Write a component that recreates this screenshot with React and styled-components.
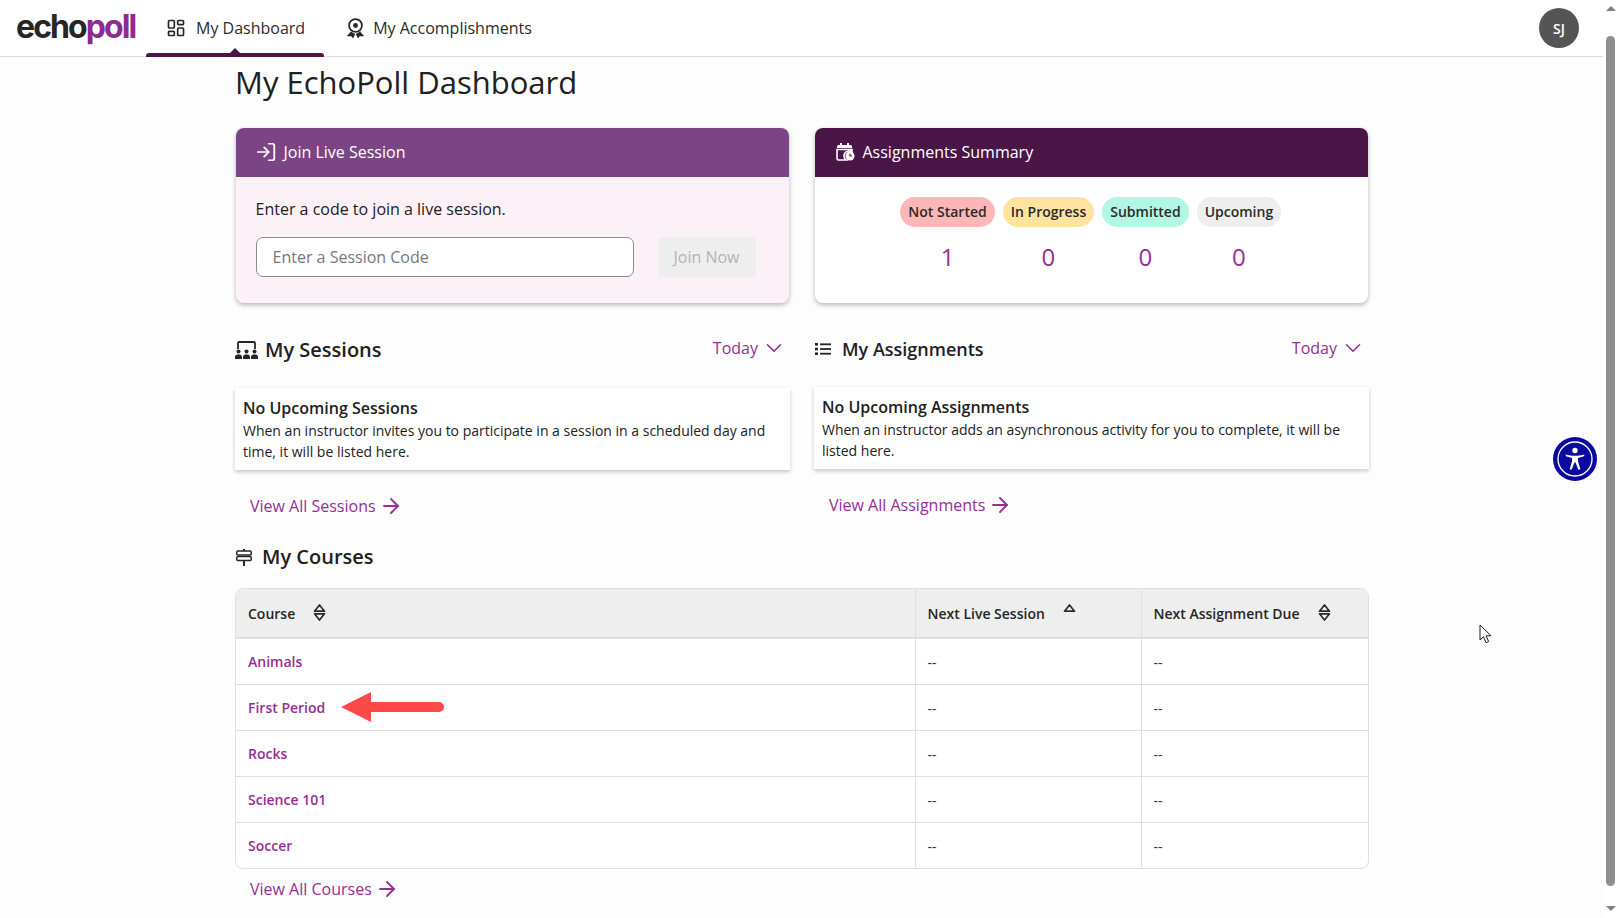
import React from 'react';
import styled, { createGlobalStyle } from 'styled-components';
import { ArrowRight, ChevronDown, LayoutDashboard, LogIn } from 'lucide-react';

const GlobalStyle = createGlobalStyle`
  html, body {
    margin: 0;
    padding: 0;
    height: 918px;
    overflow: hidden;
    background: #fdfdfd;
    font-family: 'Open Sans', 'Noto Sans', sans-serif;
    color: #212121;
  }
  * { box-sizing: border-box; }
`;

const Shell = styled.div`
  position: relative;
  display: flex;
  width: 1618px;
  height: 918px;
  overflow: hidden;
`;
const Page = styled.div`
  flex: 1;
  min-width: 0;
`;
const TopBar = styled.header`
  display: flex;
  align-items: stretch;
  height: 57px;
  padding: 0 24px 0 16px;
  background: #fff;
  border-bottom: 1px solid #dcdcdc;
`;
const Logo = styled.div`
  width: 130px;
  font-family: 'Inter', sans-serif;
  font-weight: 700;
  font-size: 32px;
  letter-spacing: -1.9px;
  line-height: 54px;
  color: #262626;
  span { color: #8e2a90; }
`;
const NavTab = styled.a`
  position: relative;
  display: flex;
  align-items: center;
  gap: ${p => p.$gap}px;
  height: 56px;
  padding: 0 ${p => p.$right}px 0 ${p => p.$left}px;
  font-size: 16px;
  color: #2b2b2b;
  ${p => p.$active && `
    &::after {
      content: '';
      position: absolute;
      left: 0;
      right: 0;
      bottom: -1px;
      height: 4px;
      background: #4a1547;
      border-radius: 3px 3px 0 0;
    }
    &::before {
      content: '';
      position: absolute;
      left: 50%;
      margin-left: -6px;
      bottom: 2px;
      border-left: 6px solid transparent;
      border-right: 6px solid transparent;
      border-bottom: 6px solid #4a1547;
    }
  `}
`;
const Spacer = styled.div`
  flex: 1;
`;
const Avatar = styled.div`
  align-self: center;
  display: flex;
  align-items: center;
  justify-content: center;
  width: 40px;
  height: 40px;
  border-radius: 50%;
  background: #555;
  color: #fff;
  font-size: 14px;
  font-weight: 600;
`;

const Content = styled.main`
  width: 1134px;
  margin-left: 235px;
`;
const Title = styled.h1`
  margin: 0;
  padding: 1px 0 0;
  font-size: 31px;
  font-weight: 400;
  line-height: 48px;
  color: #212121;
`;
const Columns = styled.div`
  display: grid;
  grid-template-columns: 555px 555px;
  column-gap: 24px;
`;
const SummaryCard = styled.section`
  margin: 22px 1px 0 0.5px;
  height: 175px;
  border-radius: 8px;
  overflow: hidden;
  background: ${p => p.$bg};
  box-shadow: 0 2px 5px rgba(0, 0, 0, 0.28);
`;
const CardHeader = styled.div`
  display: flex;
  align-items: center;
  gap: 8px;
  height: 49px;
  padding: 0 0 2px 21px;
  background: ${p => p.$bg};
  color: #fff;
  font-size: 16px;
`;
const JoinIcon = styled(LogIn)`
  margin: 0 -1px 0 -2px;
`;
const JoinBody = styled.div`
  padding: 20px 20px 0;
`;
const JoinLabel = styled.p`
  margin: 0 0 16px;
  font-size: 16px;
  line-height: 24px;
  color: #212121;
`;
const JoinRow = styled.div`
  display: flex;
  gap: 24px;
`;
const CodeInput = styled.input`
  width: 378px;
  height: 40px;
  padding: 0 16px;
  border: 1px solid #8f8a90;
  border-radius: 7px;
  background: #fff;
  font: 400 16px 'Open Sans', sans-serif;
  &::placeholder { color: #79757a; opacity: 1; }
`;
const JoinButton = styled.button`
  width: 98px;
  height: 40px;
  border: 0;
  border-radius: 4px;
  background: #eee;
  color: #b4b4b4;
  font: 400 16px 'Open Sans', sans-serif;
`;
const SummaryGrid = styled.div`
  display: grid;
  grid-template-columns: repeat(4, auto);
  justify-content: center;
  column-gap: 8px;
  row-gap: 12px;
  padding-top: 20px;
  margin-right: 1px;
`;
const Pill = styled.div`
  height: 30px;
  padding: 0 8px;
  border-radius: 15px;
  background: ${p => p.$bg};
  font-size: 14px;
  font-weight: 600;
  line-height: 30px;
  color: #2a2a2a;
`;
const Count = styled.div`
  text-align: center;
  font-size: 24px;
  line-height: 36px;
  color: #962d96;
`;

const SectionHead = styled.div`
  display: flex;
  align-items: center;
  justify-content: space-between;
  height: 31px;
  margin-top: ${p => p.$top}px;
`;
const HeadTitle = styled.h2`
  display: flex;
  align-items: center;
  gap: ${p => p.$gap}px;
  margin: 0;
  padding-left: ${p => p.$left || 0}px;
  font-size: ${p => p.$size || 20}px;
  font-weight: 600;
  color: #212121;
`;
const TodayButton = styled.div`
  display: flex;
  align-items: center;
  gap: 3px;
  height: 31px;
  padding: 0 3px ${p => p.$bottom}px 12px;
  font-size: 16px;
  color: #962d96;
`;
const NoteCard = styled.div`
  height: 82px;
  margin-top: ${p => p.$top}px;
  padding: 9px 8px 0;
  background: #fff;
  box-shadow: 0 2px 4px rgba(0, 0, 0, 0.22);
`;
const NoteTitle = styled.div`
  font-size: 16px;
  font-weight: 600;
  line-height: 22px;
  color: #212121;
`;
const NoteText = styled.div`
  margin-top: 1px;
  font-size: 14px;
  line-height: 21px;
  color: #212121;
`;
const ViewLink = styled.a`
  display: flex;
  align-items: center;
  gap: 3px;
  height: 24px;
  margin: ${p => p.$top}px 0 0 15px;
  font-size: 16px;
  color: #962d96;
`;
const CoursesHead = styled(HeadTitle)`
  height: 30px;
  margin-top: 23px;
  padding-left: 1px;
`;
const TableWrap = styled.div`
  margin-top: 17px;
  border: 1px solid #e0e0e0;
  border-radius: 8px;
  overflow: hidden;
  background: #fff;
`;
const CourseTable = styled.table`
  width: 100%;
  border-collapse: collapse;
  table-layout: fixed;
  font-size: 14px;
`;
const Th = styled.th`
  width: ${p => p.$w};
  height: 49px;
  padding: 0 12px;
  background: #eee;
  border-bottom: 2px solid #e0e0e0;
  border-left: ${p => (p.$first ? '0' : '1px solid #e0e0e0')};
  text-align: left;
  font-weight: 600;
  color: #262626;
`;
const SortWrap = styled.span`
  display: inline-flex;
  align-items: center;
  gap: ${p => p.$gap}px;
  svg { margin-top: -2px; }
`;
const Td = styled.td`
  position: relative;
  height: 46px;
  padding: 0 12px;
  border-bottom: ${p => (p.$last ? '0' : '1px solid #e0e0e0')};
  border-left: ${p => (p.$first ? '0' : '1px solid #e0e0e0')};
  color: #333;
`;
const DashCell = styled(Td)`
  padding-top: 2px;
`;
const CourseLink = styled.a`
  font-weight: 600;
  color: #962d96;
`;
const RedArrow = styled.svg`
  position: absolute;
  left: 105px;
  top: 7px;
`;

const Rail = styled.aside`
  display: flex;
  flex-direction: column;
  align-items: center;
  width: 15px;
  height: 918px;
  padding-top: 6px;
  background: #fff;
`;
const RailArrow = styled.div`
  width: 0;
  height: 0;
  border-left: 5px solid transparent;
  border-right: 5px solid transparent;
  ${p => (p.$down ? 'border-top: 5px solid #808080;' : 'border-bottom: 5px solid #808080;')}
`;
const RailThumb = styled.div`
  width: 9px;
  height: 850px;
  margin: 25px 0 20px;
  border-radius: 5px;
  background: #8f8f8f;
`;
const A11yButton = styled.div`
  position: absolute;
  left: 1553px;
  top: 437px;
  display: flex;
  align-items: center;
  justify-content: center;
  width: 44px;
  height: 44px;
  border-radius: 50%;
  background: #0a0aa0;
`;
const Cursor = styled.svg`
  position: absolute;
  left: 1479px;
  top: 624px;
`;

function AwardIcon() {
  return (
    <svg width="17" height="20" viewBox="0 0 17 20" fill="none" stroke="#262626" strokeWidth="1.8">
      <circle cx="8.5" cy="7.5" r="6.4" />
      <circle cx="8.5" cy="7.5" r="2.4" fill="#262626" stroke="none" />
      <path d="M4.5 14 1.5 17.500l3-.2 1.400 1.800 1.600-3.400M12.500 14l3 3.500-3-.2-1.400 1.800-1.600-3.400" strokeWidth="1.5" fill="#262626" />
    </svg>
  );
}

function CalendarClock() {
  return (
    <svg width="19" height="18" viewBox="0 0 19 18">
      <path d="M4 0h2v2h5V0h2v2h1.500A1.500 1.500 0 0 1 16 3.500V5H1V3.500A1.500 1.500 0 0 1 2.500 2H4Z" fill="#fff" />
      <path d="M1 6.500h15V9a5 5 0 0 0-6 8H2.500A1.500 1.500 0 0 1 1 15.500Z" fill="none" stroke="#fff" strokeWidth="1.600" />
      <circle cx="14" cy="13" r="4.500" fill="#fff" />
      <path d="M14 10.800V13h2" fill="none" stroke="#4a1547" strokeWidth="1.200" />
    </svg>
  );
}

function AudienceIcon() {
  return (
    <svg width="23" height="18" viewBox="0 0 23 18" fill="#262626">
      <path d="M3 8V2.200C3 1.500 3.500 1 4.200 1h14.600c.7 0 1.200.5 1.200 1.200V8" fill="none" stroke="#262626" strokeWidth="1.800" />
      <circle cx="3.500" cy="10.500" r="2" />
      <circle cx="11.500" cy="10.500" r="2" />
      <circle cx="19.500" cy="10.500" r="2" />
      <path d="M0 18v-2c0-1.500 1.200-2.500 2.500-2.500h2c1.300 0 2.500 1 2.500 2.500v2ZM8 18v-2c0-1.500 1.200-2.500 2.500-2.500h2c1.300 0 2.500 1 2.500 2.500v2ZM16 18v-2c0-1.500 1.200-2.500 2.500-2.500h2c1.300 0 2.500 1 2.500 2.500v2Z" />
    </svg>
  );
}

function ListIcon() {
  return (
    <svg width="16" height="14" viewBox="0 0 16 14" fill="#262626">
      <rect x="0" y="1" width="3" height="2.600" />
      <rect x="0" y="5.700" width="3" height="2.600" />
      <rect x="0" y="10.400" width="3" height="2.600" />
      <rect x="5" y="1.400" width="11" height="1.800" />
      <rect x="5" y="6.100" width="11" height="1.800" />
      <rect x="5" y="10.800" width="11" height="1.800" />
    </svg>
  );
}

const SignSvg = styled.svg`
  margin-top: 3px;
`;

function SignIcon() {
  return (
    <SignSvg width="16" height="17" viewBox="0 0 16 17" fill="none" stroke="#262626" strokeWidth="1.500">
      <path d="M8 0v2" strokeWidth="2" />
      <rect x="0.800" y="2" width="14.400" height="4" rx="1" />
      <rect x="0.800" y="7.500" width="14.400" height="4" rx="1" />
      <path d="M8 11.500V17" strokeWidth="2" />
    </SignSvg>
  );
}

function SortIcon({ up = true, down = true }) {
  return (
    <svg width="13" height="17" viewBox="0 0 13 17" fill="none" stroke="#2a2a2a" strokeWidth="1.700" strokeLinejoin="round">
      {up && <path d="M6.500 1 11.500 7.200h-10Z" />}
      {down && <path d="M6.500 16 1.500 9.800h10Z" />}
    </svg>
  );
}

function AccessIcon() {
  return (
    <svg width="36" height="36" viewBox="0 0 36 36" fill="#fff">
      <circle cx="18" cy="18" r="17" fill="none" stroke="#fff" strokeWidth="1.300" />
      <circle cx="18" cy="9.500" r="2.700" />
      <path d="M8.500 13.400 9 15.300l6 1.600v3.300l-2.300 8 1.900.6 2.900-7.400h1l2.900 7.400 1.900-.6-2.300-8v-3.300l6-1.600.5-1.900c-3 .8-6.400 1.300-9.500 1.300s-6.500-.5-9.500-1.300Z" />
    </svg>
  );
}

const courses = ['Animals', 'First Period', 'Rocks', 'Science 101', 'Soccer'];

export default function App() {
  return (
    <>
      <GlobalStyle />
      <Shell>
        <Page>
          <TopBar>
            <Logo>echo<span>poll</span></Logo>
            <NavTab $active $left={20} $right={19} $gap={10}>
              <LayoutDashboard size={20} color="#262626" strokeWidth={2} />
              My Dashboard
            </NavTab>
            <NavTab $left={23} $right={19} $gap={9}>
              <AwardIcon />
              My Accomplishments
            </NavTab>
            <Spacer />
            <Avatar>SJ</Avatar>
          </TopBar>
          <Content>
            <Title>My EchoPoll Dashboard</Title>
            <Columns>
              <SummaryCard $bg="#fdf1f8">
                <CardHeader $bg="#7b4585">
                  <JoinIcon size={22} color="#fff" strokeWidth={1.9} />
                  Join Live Session
                </CardHeader>
                <JoinBody>
                  <JoinLabel>Enter a code to join a live session.</JoinLabel>
                  <JoinRow>
                    <CodeInput placeholder="Enter a Session Code" />
                    <JoinButton disabled>Join Now</JoinButton>
                  </JoinRow>
                </JoinBody>
              </SummaryCard>
              <SummaryCard $bg="#fff">
                <CardHeader $bg="#4a1547">
                  <CalendarClock />
                  Assignments Summary
                </CardHeader>
                <SummaryGrid>
                  <Pill $bg="#ffb6b6">Not Started</Pill>
                  <Pill $bg="#ffe4a0">In Progress</Pill>
                  <Pill $bg="#b2f7e4">Submitted</Pill>
                  <Pill $bg="#eeeeee">Upcoming</Pill>
                  <Count>1</Count>
                  <Count>0</Count>
                  <Count>0</Count>
                  <Count>0</Count>
                </SummaryGrid>
              </SummaryCard>
              <div>
                <SectionHead $top={31}>
                  <HeadTitle $gap={7}><AudienceIcon />My Sessions</HeadTitle>
                  <TodayButton $bottom={3}>Today<ChevronDown size={26} strokeWidth={1.5} /></TodayButton>
                </SectionHead>
                <NoteCard $top={23}>
                  <NoteTitle>No Upcoming Sessions</NoteTitle>
                  <NoteText>When an instructor invites you to participate in a session in a scheduled day and time, it will be listed here.</NoteText>
                </NoteCard>
                <ViewLink $top={24}>View All Sessions<ArrowRight size={24} strokeWidth={1.8} /></ViewLink>
              </div>
              <div>
                <SectionHead $top={30}>
                  <HeadTitle $gap={11} $size={18} $left={1}><ListIcon />My Assignments</HeadTitle>
                  <TodayButton $bottom={1}>Today<ChevronDown size={26} strokeWidth={1.5} /></TodayButton>
                </SectionHead>
                <NoteCard $top={23}>
                  <NoteTitle>No Upcoming Assignments</NoteTitle>
                  <NoteText>When an instructor adds an asynchronous activity for you to complete, it will be listed here.</NoteText>
                </NoteCard>
                <ViewLink $top={24}>View All Assignments<ArrowRight size={24} strokeWidth={1.8} /></ViewLink>
              </div>
            </Columns>
            <CoursesHead $gap={10}><SignIcon />My Courses</CoursesHead>
            <TableWrap>
              <CourseTable>
                <thead>
                  <tr>
                    <Th $first $w="679px"><SortWrap $gap={18}>Course<SortIcon /></SortWrap></Th>
                    <Th $w="226px"><SortWrap $gap={18}>Next Live Session<SortIcon down={false} /></SortWrap></Th>
                    <Th><SortWrap $gap={18}>Next Assignment Due<SortIcon /></SortWrap></Th>
                  </tr>
                </thead>
                <tbody>
                  {courses.map((name, i) => (
                    <tr key={name}>
                      <Td $first $last={i === courses.length - 1}>
                        <CourseLink>{name}</CourseLink>
                        {name === 'First Period' && (
                          <RedArrow width="103" height="30" viewBox="0 0 103 30">
                            <path d="M0 15 30 0v10h68a5 5 0 0 1 0 10H30v10Z" fill="#ff4848" />
                          </RedArrow>
                        )}
                      </Td>
                      <DashCell $last={i === courses.length - 1}>--</DashCell>
                      <DashCell $last={i === courses.length - 1}>--</DashCell>
                    </tr>
                  ))}
                </tbody>
              </CourseTable>
            </TableWrap>
            <ViewLink $top={8}>View All Courses<ArrowRight size={24} strokeWidth={1.8} /></ViewLink>
          </Content>
        </Page>
        <Rail>
          <RailArrow />
          <RailThumb />
          <RailArrow $down />
        </Rail>
        <A11yButton><AccessIcon /></A11yButton>
        <Cursor width="14" height="21" viewBox="0 0 14 21">
          <path d="M1 1v15l3.500-3.300 2.500 6 2.600-1.100-2.500-5.800h5Z" fill="#fff" stroke="#1a1a2a" strokeWidth="1" />
        </Cursor>
      </Shell>
    </>
  );
}
